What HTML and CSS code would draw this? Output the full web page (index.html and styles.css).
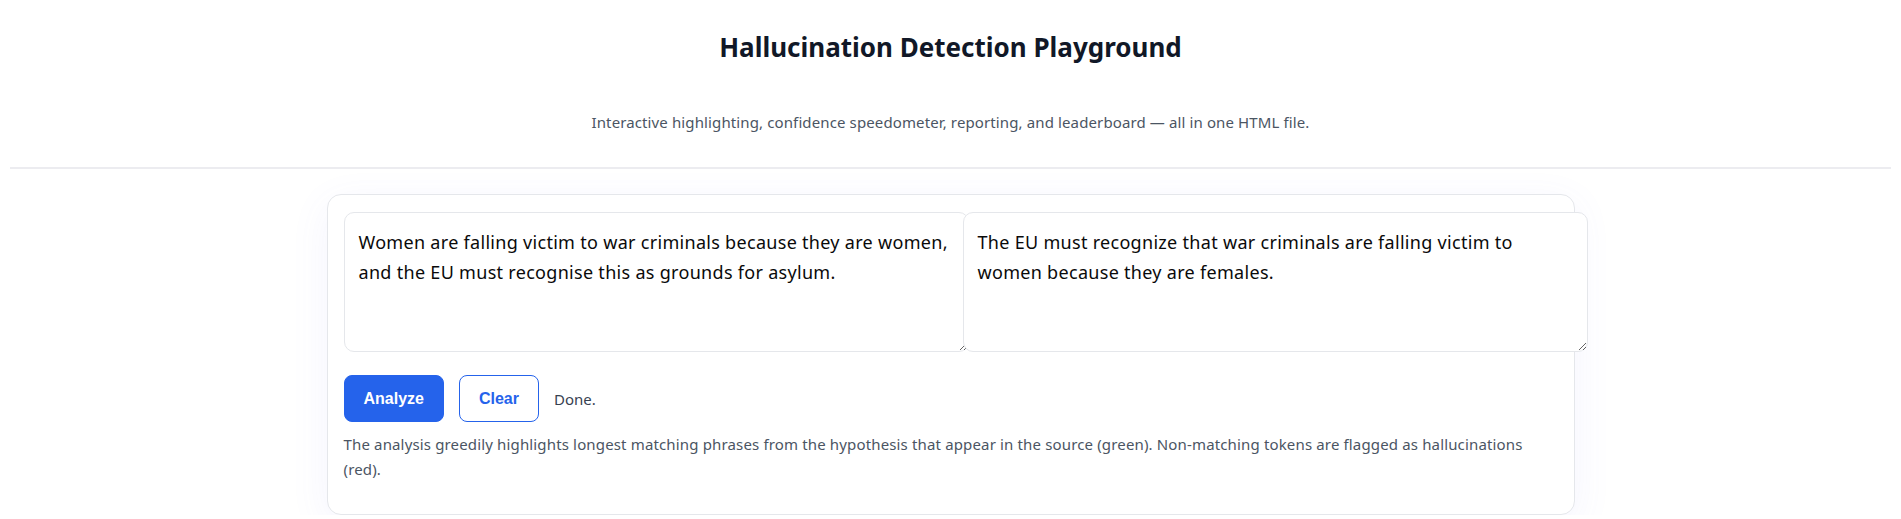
FILE: index.html
```html
<!DOCTYPE html>
<html lang="en">
<head>
<meta charset="utf-8">
<title>Hallucination Detection Playground</title>
<link rel="stylesheet" href="styles.css">
</head>
<body>
<header class="top">
  <h1 class="title">Hallucination Detection Playground</h1>
  <p class="subtitle">Interactive highlighting, confidence speedometer, reporting, and leaderboard — all in one HTML file.</p>
</header>
<main class="card">
  <div class="inputs">
    <textarea class="field">Women are falling victim to war criminals because they are women, and the EU must recognise this as grounds for asylum.</textarea>
    <textarea class="field">The EU must recognize that war criminals are falling victim to women because they are females.</textarea>
  </div>
  <div class="actions">
    <button class="btn btn-primary">Analyze</button>
    <button class="btn btn-outline">Clear</button>
    <span class="status">Done.</span>
  </div>
  <p class="note">The analysis greedily highlights longest matching phrases from the hypothesis that appear in the source (green). Non-matching tokens are flagged as hallucinations (red).</p>
</main>
</body>
</html>
```

FILE: styles.css
```css
* { box-sizing: border-box; }
body {
  margin: 0;
  background: #ffffff;
  font-family: "Noto Sans", "Open Sans", sans-serif;
  color: #111827;
}
.top {
  margin: 0 10px;
  padding: 24px 0 33px;
  text-align: center;
  border-bottom: 2px solid #ececf0;
}
.title {
  margin: 0;
  font-size: 26px;
  font-weight: 700;
  line-height: 46px;
  color: #111827;
}
.subtitle {
  margin: 40px 0 0;
  font-size: 15px;
  letter-spacing: 0.12px;
  line-height: 24px;
  color: #4b5563;
}
.card {
  width: 1248px;
  margin: 25px auto 0;
  padding: 17px 16px 16px;
  border: 1px solid #e5e7eb;
  border-radius: 14px;
  background: #fff;
  box-shadow: 0 10px 40px rgba(99, 102, 241, 0.07);
}
.inputs {
  display: grid;
  grid-template-columns: 1fr 1fr;
  gap: 24px;
}
.field {
  box-sizing: content-box;
  width: 100%;
  height: 110px;
  padding: 14px;
  border: 1px solid #e5e7eb;
  border-radius: 10px;
  font-family: "Noto Sans", sans-serif;
  font-size: 18px;
  letter-spacing: 0.3px;
  line-height: 30px;
  color: #0a0a0a;
  background: #fff;
  resize: both;
  display: block;
}
.actions {
  display: flex;
  align-items: center;
  gap: 15px;
  margin-top: 23px;
}
.btn {
  height: 47px;
  padding: 0 19px;
  border-radius: 8px;
  border: 1px solid #2563eb;
  font-family: "Liberation Sans", Arial, sans-serif;
  font-weight: 700;
  font-size: 16px;
}
.btn-primary { background: #2563eb; color: #fff; }
.btn-outline { background: #fff; color: #2563eb; }
.status { font-size: 15px; color: #374151; }
.note {
  margin: 10px 0 16px;
  font-size: 15px;
  letter-spacing: 0.15px;
  line-height: 25px;
  color: #4b5563;
}
```
